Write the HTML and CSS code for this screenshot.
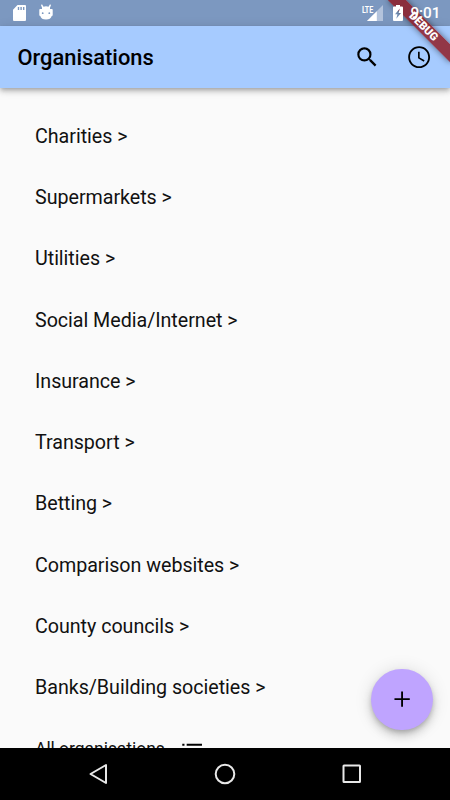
FILE: index.html
```html
<!DOCTYPE html>
<html lang="en">
<head>
  <meta charset="UTF-8" />
  <meta name="viewport" content="width=device-width, initial-scale=1.0"/>
  <title>Organisations</title>
  <link rel="stylesheet" href="styles.css">
</head>
<body>
  <div class="screen">

    <!-- Status bar -->
    <div class="status-bar">
      <svg class="sd-icon" viewBox="0 0 13 16"><path fill="#fff" fill-rule="evenodd" d="M4.5 0H12Q13 0 13 1V15Q13 16 12 16H1Q0 16 0 15V4.8ZM4.8 2V5H6.2V2ZM7.4 2V5H8.8V2ZM10 2V5H11.4V2Z"/></svg>
      <svg class="droid-icon" viewBox="0 0 14 16"><path fill="#fff" d="M2 1 3 .3 4.5 2.7Q7 1.8 9.5 2.7L11 .3 12 1 11 3.7V5H13Q13.7 5 13.7 6V11Q13.7 12 12.7 12Q11.8 15.6 7 15.6T1.3 12Q.3 12 .3 11V6Q.3 5 1 5H3V3.7Z"/><circle cx="3.7" cy="9.2" r=".9" fill="#7c98c0"/><circle cx="10.3" cy="9.2" r=".9" fill="#7c98c0"/></svg>
      <div class="status-right">
        <span class="lte">LTE</span>
        <svg class="signal-icon" viewBox="0 0 16 16"><path fill="#b3c3dc" d="M16 0V16H0Z"/><path fill="#fff" d="M9.8 6.2V16H0Z"/></svg>
        <svg class="battery-icon" viewBox="0 0 10 16"><path fill="#fff" fill-rule="evenodd" d="M3 0H7V1.6H9Q10 1.6 10 2.6V15Q10 16 9 16H1Q0 16 0 15V2.6Q0 1.6 1 1.6H3ZM6.8 3.5 2 9.2H4.4L3.3 13.7 8 7.9H5.6Z"/></svg>
        <span class="time">9:01</span>
      </div>
    </div>

    <header class="app-bar">
      <h1>Organisations</h1>
      <svg class="search-icon" viewBox="0 0 24 24"><path d="M15.5 14h-.79l-.28-.27A6.471 6.471 0 0 0 16 9.5 6.5 6.5 0 1 0 9.5 16c1.61 0 3.09-.59 4.23-1.57l.27.28v.79l5 4.99L20.49 19l-4.99-5zm-6 0C7.01 14 5 11.99 5 9.5S7.01 5 9.5 5 14 7.01 14 9.5 11.99 14 9.5 14z"/></svg>
      <svg class="clock-icon" viewBox="0 0 24 24"><path d="M11.99 2C6.47 2 2 6.48 2 12s4.47 10 9.99 10C17.52 22 22 17.52 22 12S17.52 2 11.99 2zM12 20.3c-4.6 0-8.3-3.7-8.3-8.3s3.7-8.3 8.3-8.3 8.3 3.7 8.3 8.3-3.7 8.3-8.3 8.3zm.5-13.3H11v6l5.25 3.15.75-1.23-4.5-2.67z"/></svg>
    </header>

    <main class="list">
      <div class="row">Charities &gt;</div>
      <div class="row">Supermarkets &gt;</div>
      <div class="row">Utilities &gt;</div>
      <div class="row">Social Media/Internet &gt;</div>
      <div class="row">Insurance &gt;</div>
      <div class="row">Transport &gt;</div>
      <div class="row">Betting &gt;</div>
      <div class="row">Comparison websites &gt;</div>
      <div class="row">County councils &gt;</div>
      <div class="row">Banks/Building societies &gt;</div>
      <div class="row row-all">
        <span>All organisations</span>
        <svg class="list-icon" viewBox="0 0 24 24"><path d="M3 13h2v-2H3v2zm0 4h2v-2H3v2zm0-8h2V7H3v2zm4 4h14v-2H7v2zm0 4h14v-2H7v2zM7 7v2h14V7H7z"/></svg>
      </div>
    </main>

    <!-- Navigation buttons -->
    <nav class="nav-bar">
      <svg class="nav-icon" viewBox="0 0 22 22"><path d="M19 2V20L3.5 11Z"/></svg>
      <svg class="nav-icon" viewBox="0 0 22 22"><circle cx="11" cy="11" r="9.3"/></svg>
      <svg class="nav-icon" viewBox="0 0 22 22"><rect x="2.5" y="2.5" width="16.5" height="16.5" rx=".5"/></svg>
    </nav>

    <button class="fab" aria-label="Add">
      <svg viewBox="0 0 24 24"><path d="M19 12.8h-6.2V19h-1.7v-6.2H5v-1.7h6.1V5h1.7v6.1H19z"/></svg>
    </button>

    <div class="debug-banner">DEBUG</div>
  </div>
</body>
</html>
```
FILE: styles.css
```css
* {
  box-sizing: border-box;
}

body {
  margin: 0;
  font-family: Roboto, sans-serif;
  color: #000;
}

.screen {
  position: relative;
  display: flex;
  flex-direction: column;
  width: 450px;
  height: 800px;
  overflow: hidden;
  background: #fafafa;
}

svg {
  display: block;
  flex-shrink: 0;
}

/* status bar */
.status-bar {
  display: flex;
  align-items: center;
  height: 26.25px;
  flex-shrink: 0;
  padding: 0 9.5px 0 13px;
  background: #7c98c0;
  color: #fff;
}

.sd-icon {
  width: 13px;
  height: 16px;
}

.droid-icon {
  width: 14px;
  height: 16px;
  margin: 0 0 2px 13px;
}

/* stays above the debug banner */
.status-right {
  position: relative;
  z-index: 3;
  display: flex;
  align-items: center;
  margin-left: auto;
}

.lte {
  align-self: flex-start;
  margin-right: -8px;
  font-size: 9.5px;
  line-height: 11px;
  font-weight: 700;
  letter-spacing: -0.1px;
  transform: scaleX(0.75);
}

.signal-icon {
  width: 16px;
  height: 16px;
}

.battery-icon {
  width: 10px;
  height: 16px;
  margin: 0 7px 0 10px;
}

.time {
  font-size: 15.3px;
  font-weight: 500;
  line-height: 18px;
}

/* app bar */
.app-bar {
  display: flex;
  align-items: center;
  height: 61.25px;
  flex-shrink: 0;
  padding: 0 17.5px;
  background: #a6cbff;
  box-shadow: 0 2px 4px -1px rgba(0, 0, 0, 0.2), 0 4px 5px rgba(0, 0, 0, 0.14), 0 1px 10px rgba(0, 0, 0, 0.12);
  z-index: 1;
}

.app-bar h1 {
  flex: 1;
  margin: 0;
  padding-top: 2px;
  font-size: 21.875px;
  font-weight: 500;
}

.search-icon,
.clock-icon,
.list-icon,
.fab svg {
  width: 26.25px;
  height: 26.25px;
}

.clock-icon {
  margin-left: 26.25px;
}

/* list */
.list {
  flex: 1;
  min-height: 0;
  padding: 18.2px 35px 0;
  overflow: hidden;
}

.row {
  display: flex;
  align-items: center;
  height: 61.25px;
  font-size: 19.69px;
  letter-spacing: -0.04px;
  color: #111;
  white-space: nowrap;
}

.row-all {
  gap: 14px;
  font-size: 17.5px;
}

/* navigation bar */
.nav-bar {
  display: flex;
  align-items: center;
  justify-content: center;
  gap: 105px;
  height: 52.5px;
  flex-shrink: 0;
  background: #000;
}

.nav-icon {
  width: 22px;
  height: 22px;
  fill: none;
  stroke: #e8e8e8;
  stroke-width: 2;
  stroke-linejoin: round;
}

.fab {
  position: absolute;
  right: 17.5px;
  bottom: 70px;
  display: flex;
  align-items: center;
  justify-content: center;
  width: 61.25px;
  height: 61.25px;
  padding: 0;
  border: none;
  border-radius: 50%;
  background: #bfa4ff;
  box-shadow: 0 3px 5px -1px rgba(0, 0, 0, 0.2), 0 6px 10px rgba(0, 0, 0, 0.14), 0 1px 18px rgba(0, 0, 0, 0.12);
}

.debug-banner {
  position: absolute;
  top: 30.625px;
  left: 406.25px;
  width: 87.5px;
  height: 13.125px;
  background: rgba(141, 22, 30, 0.82);
  box-shadow: 0 0 6px rgba(0, 0, 0, 0.5);
  color: #fff;
  font-size: 11.16px;
  font-weight: 900;
  line-height: 13.125px;
  text-align: center;
  transform: rotate(45deg);
  transform-origin: 43.75px -30.625px;
  z-index: 2;
}
```
